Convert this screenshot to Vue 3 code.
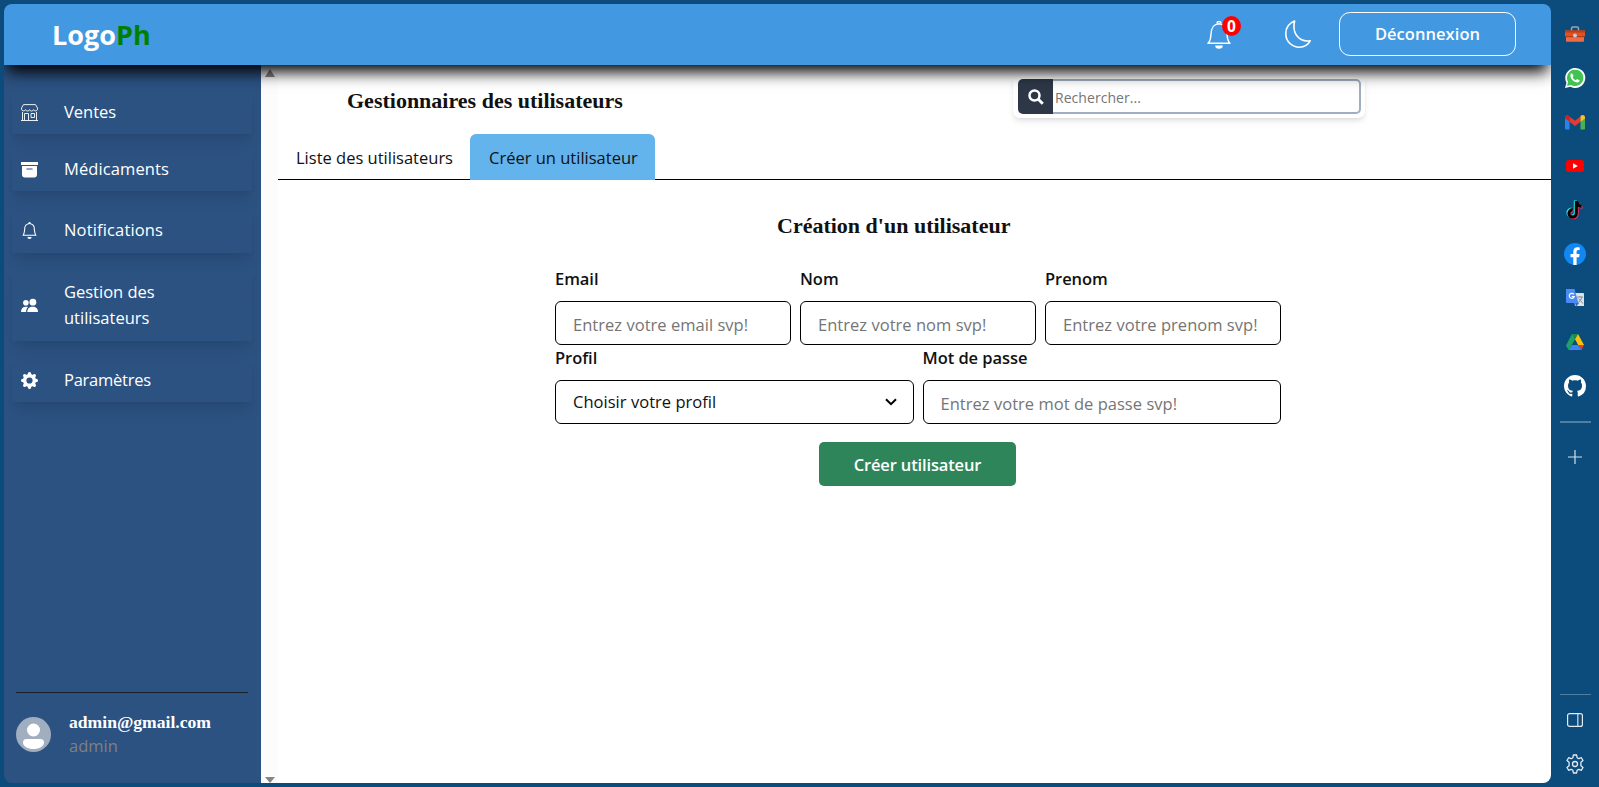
<script setup>
const apps = ['toolbox', 'whatsapp', 'gmail', 'youtube', 'tiktok', 'facebook', 'translate', 'drive', 'github']
const nav = [
  { id: 'store', label: 'Ventes' },
  { id: 'archive', label: 'Médicaments' },
  { id: 'bell', label: 'Notifications' },
  { id: 'people', label: 'Gestion des utilisateurs' },
  { id: 'gear', label: 'Paramètres' }
]
const names = [
  { label: 'Email', hint: 'Entrez votre email svp!' },
  { label: 'Nom', hint: 'Entrez votre nom svp!' },
  { label: 'Prenom', hint: 'Entrez votre prenom svp!' }
]
</script>

<template>
  <div class="browser">
    <div class="window">
      <header class="topbar">
        <div class="logo">Logo<span>Ph</span></div>
        <div class="alerts">
          <svg class="ring" viewBox="0 0 24 28" fill="none" stroke="#fff" stroke-width="1.500"><path d="M1 22.300h22c-1.900-1.600-2.600-4-2.900-8.300-.3-6-1.500-11-8.100-11.300C5.400 3 4.200 8 3.900 14c-.3 4.300-1 6.700-2.900 8.300z" stroke-linejoin="round" /><path d="M10 2.500a2 2 0 0 1 4 0" /><path d="M8.200 24.500h7.600a3.800 3.300 0 0 1-7.600 0z" fill="#fff" stroke="none" /></svg>
          <span class="badge">0</span>
        </div>
        <svg class="moon" viewBox="0 0 26 28" fill="none" stroke="#fff" stroke-width="1.6" stroke-linejoin="round"><path d="M9.6 1C3.7 3.2.8 8.3.8 13.7c0 7.600 6 13.500 13.500 13.500 4.900 0 9-2.500 11-6.500C14.500 22.500 6.700 13.700 9.600 1z" /></svg>
        <button class="logout">Déconnexion</button>
      </header>

      <div class="body">
        <aside class="sidebar">
          <nav>
            <a v-for="n in nav" :key="n.id" class="item" :class="n.id">
              <svg v-if="n.id === 'store'" viewBox="0 0 17 17" fill="none" stroke="#fff" stroke-width=".9"><path d="M2.500.6h12L16.500 4v1.200a2.100 2.100 0 0 1-4 .4 2.100 2.100 0 0 1-4 0 2.100 2.100 0 0 1-4 0 2.100 2.100 0 0 1-4-.4V4zM1.500 8v8.400M15.500 8v8.400M0 16.500h17M3.500 16.500v-7h4v7M10 9.500h3.500v4H10z" /></svg>
              <svg v-else-if="n.id === 'archive'" viewBox="0 0 17 17" fill="#fff"><path d="M0 1h17v3H0z" /><path fill-rule="evenodd" d="M1 5h15v8.500a3 3 0 0 1-3 3H4a3 3 0 0 1-3-3zM5.800 7.500a.5.5 0 0 0 0 1h5.400a.5.5 0 0 0 0-1z" /></svg>
              <svg v-else-if="n.id === 'bell'" viewBox="0 0 16 16" fill="#fff"><path d="M8 16a2 2 0 0 0 2-2H6a2 2 0 0 0 2 2zM8 1.918l-.797.161A4.002 4.002 0 0 0 4 6c0 .628-.134 2.197-.459 3.742-.16.767-.376 1.566-.663 2.258h10.244c-.287-.692-.502-1.49-.663-2.258C12.134 8.197 12 6.628 12 6a4.002 4.002 0 0 0-3.203-3.92L8 1.917zM14.22 12c.223.447.481.801.78 1H1c.299-.199.557-.553.78-1C2.68 10.2 3 6.88 3 6c0-2.42 1.720-4.440 4.005-4.901a1 1 0 1 1 1.990 0A5.002 5.002 0 0 1 13 6c0 .88.32 4.200 1.220 6z" /></svg>
              <svg v-else-if="n.id === 'people'" viewBox="0 0 17 17" fill="#fff"><circle cx="4.900" cy="5.800" r="2.800" /><circle cx="11.900" cy="5.200" r="3.400" /><path d="M0 15c0-3.500 2-5.300 4.800-5.300.9 0 1.500.1 2.200.4-1.300 1.200-1.900 2.800-1.900 4.900zM6.300 15c0-3.500 2.200-5.300 5.400-5.300S17 11.500 17 15z" /></svg>
              <svg v-else viewBox="0 0 16 16" fill="#fff"><path d="M9.405 1.050c-.413-1.400-2.397-1.400-2.810 0l-.1.340a1.464 1.464 0 0 1-2.105.872l-.31-.17c-1.283-.698-2.686.705-1.987 1.987l.169.311c.446.820.023 1.841-.872 2.105l-.34.1c-1.400.413-1.400 2.397 0 2.810l.34.1a1.464 1.464 0 0 1 .872 2.105l-.17.310c-.698 1.283.705 2.686 1.987 1.987l.311-.169a1.464 1.464 0 0 1 2.105.872l.1.340c.413 1.400 2.397 1.400 2.810 0l.1-.340a1.464 1.464 0 0 1 2.105-.872l.310.170c1.283.698 2.686-.705 1.987-1.987l-.169-.311a1.464 1.464 0 0 1 .872-2.105l.340-.1c1.400-.413 1.400-2.397 0-2.810l-.340-.1a1.464 1.464 0 0 1-.872-2.105l.170-.310c.698-1.283-.705-2.686-1.987-1.987l-.311.169a1.464 1.464 0 0 1-2.105-.872l-.1-.340zM8 10.930a2.929 2.929 0 1 1 0-5.860 2.929 2.929 0 0 1 0 5.860z" /></svg>
              <span>{{ n.label }}</span>
            </a>
          </nav>
          <div class="account">
            <svg viewBox="0 0 35 35"><circle cx="17.500" cy="17.500" r="17.500" fill="#a0aec0" /><circle cx="17.500" cy="13" r="6.500" fill="#fff" /><path d="M7 25.500a3.500 3.500 0 0 1 3.500-3.500h14a3.500 3.500 0 0 1 3.500 3.500c0 4-5 6.500-10.500 6.500S7 29.500 7 25.500z" fill="#fff" /></svg>
            <div>
              <div class="mail">admin@gmail.com</div>
              <div class="role">admin</div>
            </div>
          </div>
        </aside>

        <div class="scroll"><i class="up"></i><i class="down"></i></div>

        <main>
          <div class="head">
            <h1>Gestionnaires des utilisateurs</h1>
            <div class="search">
              <button><svg viewBox="0 0 16 16" fill="none" stroke="#fff"><circle cx="6.500" cy="6.500" r="5" stroke-width="2.500" /><path d="M10.300 10.300l4.500 4.500" stroke-width="2.900" /></svg></button>
              <input placeholder="Rechercher...">
            </div>
          </div>
          <div class="tabs">
            <div class="tab">Liste des utilisateurs</div>
            <div class="tab active">Créer un utilisateur</div>
          </div>
          <h2>Création d'un utilisateur</h2>
          <form>
            <div class="row">
              <label v-for="f in names" :key="f.label"><b>{{ f.label }}</b><input :placeholder="f.hint"></label>
            </div>
            <div class="row">
              <label><b>Profil</b>
                <div class="select"><span>Choisir votre profil</span><svg viewBox="0 0 12 8" fill="none" stroke="#000" stroke-width="2"><path d="M1 1.200l5 5 5-5" /></svg></div>
              </label>
              <label><b>Mot de passe</b><input placeholder="Entrez votre mot de passe svp!"></label>
            </div>
            <button type="button" class="submit">Créer utilisateur</button>
          </form>
        </main>
      </div>
    </div>

    <aside class="dock">
      <div v-for="a in apps" :key="a" class="app">
        <svg v-if="a === 'toolbox'" viewBox="0 0 22 22"><path d="M7.500 8V5.500q0-1.500 1.500-1.500h4q1.500 0 1.500 1.500V8" fill="none" stroke="#9aa5ad" stroke-width="1.500" /><path d="M1 7.500h20v6H1z" fill="#e4501f" /><path d="M1 7.500h20v2H1z" fill="#b8401b" /><path d="M2 13h18v5q0 .8-.8.8H2.800Q2 18.800 2 18z" fill="#ef6c42" /><path d="M2 13h18v1.200H2z" fill="#b23a18" /><circle cx="11" cy="12.600" r="2" fill="#c5ccd0" /></svg>
        <svg v-else-if="a === 'whatsapp'" viewBox="0 0 22 22"><path d="M1 21l1.500-5.300A10 10 0 1 1 6.500 19.700z" fill="#fff" /><path d="M3 19l1.100-4A8.200 8.200 0 1 1 7 17.900z" fill="#40c351" /><path d="M8 6.300c-.9 0-1.600.9-1.600 2.100 0 3.300 3.800 7 7 7 1.200 0 2.300-.8 2.300-1.900l-2.600-1.500-1.300 1.300c-1.500-.6-2.600-1.700-3.200-3.100l1-1.300z" fill="#fff" /></svg>
        <svg v-else-if="a === 'gmail'" viewBox="0 0 22 22"><path d="M1 6v11.500q0 1 1 1h3.500V9.500z" fill="#2784ee" /><path d="M21 6v11.500q0 1-1 1h-3.500V9.500z" fill="#4caf50" /><path d="M5.500 5.500 11 9.700l5.500-4.200v5.300L11 15l-5.500-4.200z" fill="#e53935" /><path d="M1 6.500C1 4 3.500 3.300 5.500 5v5.800L1 7.500z" fill="#c62828" /><path d="M21 6.500c0-2.500-2.500-3.200-4.500-1.500v5.800L21 7.500z" fill="#fbc02d" /></svg>
        <svg v-else-if="a === 'youtube'" viewBox="0 0 22 22"><rect x="2" y="5" width="18" height="12" rx="2.800" fill="#f00" /><path d="M9 8.200v5.600l4.800-2.800z" fill="#fff" /></svg>
        <svg v-else-if="a === 'tiktok'" viewBox="0 0 22 22" fill="none" stroke-width="3"><path d="M11.300 1.500v12.300a3.700 3.700 0 1 1-3.700-3.900M11.800 2.500q.8 4 4.700 4.500" stroke="#25f4ee" /><path d="M13.200 3v12.300a3.700 3.700 0 1 1-3.700-3.900M13.700 4q.8 4 4.700 4.500" stroke="#fe2c55" /><path d="M12.300 2v12.600a3.700 3.700 0 1 1-3.700-3.900M12.800 3q.8 4 4.700 4.500" stroke="#000" /></svg>
        <svg v-else-if="a === 'facebook'" viewBox="0 0 22 22"><circle cx="11" cy="11" r="11" fill="#1187f3" /><path d="M9.300 22v-7.800H6.500V11h2.800V8.600c0-2.900 1.700-4.400 4.200-4.400.9 0 1.800.1 2.200.2v2.700h-1.400c-1.300 0-1.700.8-1.700 1.700V11h3l-.5 3.200h-2.500V22z" fill="#fff" /></svg>
        <svg v-else-if="a === 'translate'" viewBox="0 0 22 22"><path d="M9 6h10q1 0 1 1v12H11z" fill="#dfe3e7" /><path d="M11 16h4l-3 4z" fill="#3367d6" /><path d="M2 2h8.500l4 14H3q-1 0-1-1z" fill="#4c8bf5" /><path d="M9.800 7.300a2.500 2.500 0 1 0 .4 2.200H7.800" fill="none" stroke="#fff" stroke-width="1.200" /><path d="M13 10h6M16 9v1M18 10q-1 4-4 5.500M14.500 11.500l4.500 5" fill="none" stroke="#78909c" stroke-width="1" /></svg>
        <svg v-else-if="a === 'drive'" viewBox="0 0 22 22"><path d="M8 3h3l1 4.500-6.500 10L4.500 19 2 14.500z" fill="#1ea362" /><path d="M8 3h6l-3 5.500z" fill="#178a4c" /><path d="M14 3l6 11h-6L11 8.500z" fill="#ffc107" /><path d="M14 14h6l-2.500 5z" fill="#e53935" /><path d="M8 14h6l3.500 5h-13z" fill="#3f83f1" /><path d="M11 8.500 14 14H8z" fill="#0c4c7c" /></svg>
        <svg v-else viewBox="0 0 16 16" fill="#fff"><path d="M8 0C3.580 0 0 3.580 0 8c0 3.540 2.290 6.530 5.470 7.590.4.070.55-.17.55-.38 0-.19-.01-.82-.01-1.490-2.010.37-2.530-.49-2.690-.94-.09-.23-.48-.94-.82-1.130-.28-.15-.68-.52-.01-.53.63-.01 1.080.58 1.230.82.72 1.210 1.870.87 2.330.66.07-.52.28-.87.51-1.070-1.780-.2-3.640-.89-3.640-3.950 0-.87.31-1.590.82-2.150-.08-.2-.36-1.020.08-2.120 0 0 .67-.21 2.200.82.64-.18 1.320-.27 2-.27s1.360.09 2 .27c1.530-1.040 2.200-.82 2.200-.82.44 1.100.16 1.920.08 2.120.51.56.82 1.270.82 2.150 0 3.070-1.870 3.750-3.650 3.950.29.25.54.73.54 1.480 0 1.070-.01 1.930-.01 2.200 0 .21.15.46.55.38A8.010 8.010 0 0 0 16 8c0-4.420-3.580-8-8-8z" /></svg>
      </div>
      <hr class="thick">
      <svg class="plus" viewBox="0 0 14 14" stroke="#d5e0ea" stroke-width="1.200"><path d="M7 0v14M0 7h14" /></svg>
      <div class="grow"></div>
      <hr>
      <svg class="panel" viewBox="0 0 16 14" fill="none" stroke="#e3ebf2" stroke-width="1.200"><rect x=".6" y=".6" width="14.800" height="12.800" rx="2" /><path d="M10.800 1v12" stroke-width="1.500" opacity=".75" /></svg>
      <svg class="cog" viewBox="0 0 20 20" fill="none" stroke="#e3ebf2" stroke-width="1.300" stroke-linejoin="round"><circle cx="10" cy="10" r="2.500" /><path d="M8.400 1h3.200l.5 2.700 1.700 1 2.600-1L18 6.500l-2.100 1.800v3.400l2.100 1.800-1.600 2.800-2.600-1-1.700 1-.5 2.700H8.400l-.5-2.700-1.700-1-2.600 1L2 13.500l2.100-1.800V8.300L2 6.500l1.600-2.800 2.600 1 1.700-1z" /></svg>
    </aside>
  </div>
</template>

<style>
html, body { margin: 0; overflow: hidden; }
</style>

<style scoped>
* { box-sizing: border-box; }
.browser {
  width: 1599px; height: 787px; background: #0c4c7c; display: flex; padding: 4px 0 4px 4px;
  font-family: "Open Sans", "Noto Sans", sans-serif; font-size: 16.5px; line-height: 26px; color: #111;
}
.window { width: 1547px; height: 779px; border-radius: 8px; overflow: hidden; display: flex; flex-direction: column; }
button, input { font: inherit; letter-spacing: inherit; border: 0; margin: 0; padding: 0; outline: 0; }
svg { display: block; flex: none; }

.topbar {
  height: 61px; flex: none; background: #4299e1; position: relative; z-index: 2; display: flex; align-items: center;
  padding: 0 35px 2px 48px; box-shadow: 0 10px 15px -3px #000;
}
.logo { color: #fff; font-weight: 700; font-size: 27px; line-height: 36px; letter-spacing: 0; margin-right: auto; padding-top: 2px; }
.logo span { color: #008000; }
.alerts { position: relative; width: 24px; height: 28px; margin: 2px 54px 0 0; }
.ring { width: 24px; height: 28px; }
.badge {
  position: absolute; left: 15px; top: -5px; width: 19px; height: 20px; border-radius: 50%; background: red;
  color: #fff; font-weight: 700; font-size: 15.500px; line-height: 20px; text-align: center;
}
.moon { width: 26px; height: 28px; margin: 1px 28px 0 0; }
.logout { width: 177px; height: 44px; border: 1px solid #fff; border-radius: 11px; background: none; color: #fff; font-weight: 600; letter-spacing: .05px; }

.body { flex: 1; display: flex; min-height: 0; }
.sidebar { width: 257px; background: #2c5282; color: #fff; padding: 27px 9px 0 8px; display: flex; flex-direction: column; }
nav { flex: 1; }
.item {
  display: flex; align-items: center; gap: 26px; height: 42px; padding: 0 60px 2px 9px; margin-bottom: 15px;
  box-shadow: 0 10px 15px -3px rgba(0, 0, 0, .1), 0 4px 6px -2px rgba(0, 0, 0, .05);
}
.item svg { width: 17px; height: 17px; }
.item.archive { margin-bottom: 18px; letter-spacing: .1px; }
.item.bell { height: 44px; margin-bottom: 18px; letter-spacing: .15px; }
.item.people { height: 70px; margin-bottom: 19px; }
.item.gear { letter-spacing: -.25px; }
.account { margin: 0 4px; border-top: 1px solid #1a202c; height: 91px; display: flex; gap: 18px; padding-top: 16px; }
.account svg { width: 35px; height: 35px; margin-top: 8px; }
.mail { font: bold 17.600px/26px "Liberation Serif", serif; }
.role { color: #808080; line-height: 22px; }

.scroll { width: 17px; background: #fcfcfc; display: flex; flex-direction: column; align-items: center; justify-content: space-between; padding-top: 4px; }
.up, .down { border: 5.500px solid transparent; border-top: 0; border-bottom: 8px solid #858585; }
.down { border-bottom: 0; border-top: 6px solid #858585; }

main { width: 1273px; background: #fff; }
.head { height: 69px; display: flex; padding-left: 69px; }
h1, h2 { font: bold 22px/28px "Liberation Serif", serif; margin: 0; }
h1 { width: 666px; padding-top: 22px; }
.search { width: 352px; height: 44px; margin-top: 9px; border-radius: 7px; padding: 5px 4px 4px 5px; display: flex; box-shadow: 0 4px 6px -1px rgba(0, 0, 0, .1), 0 2px 4px -1px rgba(0, 0, 0, .06); }
.search button { width: 35px; background: #2d3748; border-radius: 5px 0 0 5px; display: flex; align-items: center; justify-content: center; }
.search svg { width: 16px; height: 16px; }
.search input { flex: 1; border: 2px solid #a0aec0; border-left: 0; border-radius: 0 5px 5px 0; padding: 2px 0 0 2px; font-size: 14px; letter-spacing: .05px; }
input::placeholder { color: #757575; opacity: 1; }
.tabs { height: 46px; display: flex; position: relative; box-shadow: inset 0 -1px #000; }
.tab { width: 192px; padding-left: 18px; line-height: 47px; white-space: nowrap; }
.active { width: 185px; background: #63b3ed; border-radius: 6px 6px 0 0; padding-left: 19px; }
h2 { margin: 32px 0 0; padding-left: 499px; }
form { width: 726px; margin: 26px 0 0 277px; display: flex; flex-direction: column; align-items: flex-start; }
.row { width: 726px; display: flex; gap: 9px; height: 79px; }
label { flex: 1; min-width: 0; display: flex; flex-direction: column; }
b { font-weight: 600; margin-bottom: 9px; letter-spacing: -.05px; }
.row input, .select { width: 100%; height: 44px; border: 1px solid #000; border-radius: 6px; padding: 2px 17px 0; background: #fff; letter-spacing: .03px; }
.select { display: flex; align-items: center; justify-content: space-between; padding: 0 16px 0 17px; }
.select svg { width: 12px; height: 8px; }
.submit { width: 197px; height: 44px; background: #2f855a; color: #fff; font-weight: 600; border-radius: 5px; margin: 18px 0 0 264px; letter-spacing: -.15px; padding-top: 1px; }

.dock { width: 48px; height: 779px; display: flex; flex-direction: column; align-items: center; padding-top: 19px; }
.app { width: 22px; height: 22px; margin-bottom: 22px; }
.app svg { width: 22px; height: 22px; }
hr { width: 31px; height: 1px; border: 0; margin: 0; background: #517fa3; flex: none; }
.thick { height: 2px; margin-top: 2px; }
.plus { width: 14px; height: 14px; margin-top: 27px; }
.grow { flex: 1; }
.panel { width: 16px; height: 14px; margin-top: 18px; }
.cog { width: 20px; height: 20px; margin: 27px 0 9px; }
</style>
